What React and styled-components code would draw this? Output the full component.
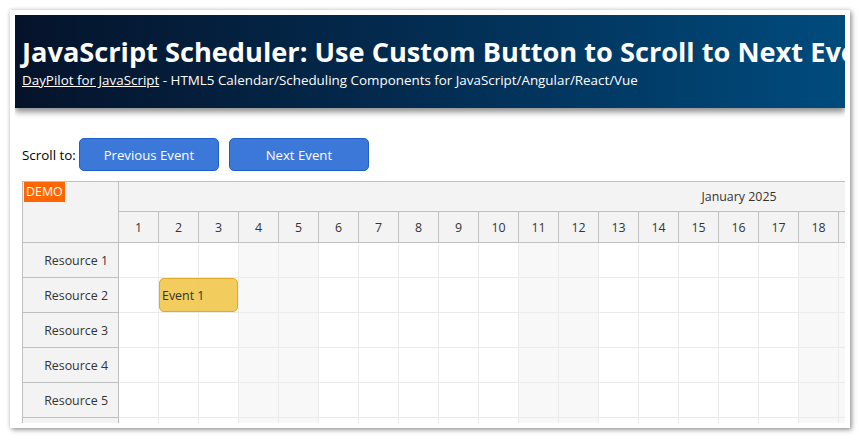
import React from "react";
import styled, { createGlobalStyle } from "styled-components";

const Global = createGlobalStyle`
  html, body { margin: 0; padding: 0; background: #fff; }
  body { font-family: "Open Sans", "Noto Sans", sans-serif; }
`;

const Frame = styled.div`
  margin: 10px;
  width: 840px;
  height: 418px;
  box-sizing: border-box;
  padding: 5px;
  background: #fff;
  overflow: hidden;
  box-shadow: 2px 2px 5px rgba(0, 0, 0, 0.35), 0 0 4px rgba(0, 0, 0, 0.18);
`;

const Page = styled.div`
  width: 830px;
  height: 408px;
  overflow: hidden;
`;

const Header = styled.header`
  position: relative;
  z-index: 1;
  height: 93px;
  box-sizing: border-box;
  padding: 20px 0 0 7px;
  background: linear-gradient(90deg, #05132a 0%, #032a4e 45%, #004b7d 100%);
  box-shadow: 0 4px 6px rgba(0, 0, 0, 0.45);
  color: #fff;
  white-space: nowrap;
  overflow: hidden;
`;

const Title = styled.h1`
  margin: 0;
  font-size: 27.2px;
  line-height: 34px;
  font-weight: 700;
`;

const Subtitle = styled.div`
  margin-top: 1px;
  font-size: 13.4px;
  line-height: 20px;
  a { color: #fff; text-decoration: underline; }
`;

const Toolbar = styled.div`
  display: flex;
  align-items: center;
  gap: 10px;
  padding: 30px 0 10px 7px;
  font-size: 13.4px;
  color: #000;
`;

const Label = styled.span`
  margin-right: -7px;
`;

const Button = styled.button`
  width: 140px;
  height: 33px;
  box-sizing: border-box;
  background: #3c78d8;
  border: 1px solid #1f5fc8;
  border-radius: 5px;
  color: #fff;
  font-family: inherit;
  font-size: 13.2px;
  cursor: pointer;
`;

const Scheduler = styled.div`
  margin-left: 7px;
  display: flex;
  width: max-content;
  border-top: 1px solid #c0c0c0;
  border-left: 1px solid #c0c0c0;
  font-size: 12.4px;
  color: #333;
`;

const RowHeaders = styled.div`
  flex: none;
  width: 95px;
  background: #f3f3f3;
  border-right: 1px solid #c0c0c0;
`;

const Corner = styled.div`
  height: 60px;
  padding: 0 1px;
  border-bottom: 1px solid #c0c0c0;
`;

const Demo = styled.span`
  display: inline-block;
  background: #ff6600;
  color: #fff;
  padding: 0 2px;
  line-height: 20px;
  font-size: 12.4px;
`;

const RowHeader = styled.div`
  height: 34px;
  border-bottom: 1px solid #c0c0c0;
  display: flex;
  align-items: center;
  justify-content: flex-end;
  padding-right: 10px;
`;

const Timeline = styled.div`
  flex: none;
  width: 1240px;
`;

const MonthCell = styled.div`
  height: 29px;
  background: #f3f3f3;
  border-bottom: 1px solid #c0c0c0;
  display: flex;
  align-items: center;
  justify-content: center;
`;

const DayRow = styled.div`
  display: flex;
  height: 30px;
  background: #f3f3f3;
  border-bottom: 1px solid #c0c0c0;
`;

const DayCell = styled.div`
  width: 39px;
  flex: none;
  border-right: 1px solid #c0c0c0;
  display: flex;
  align-items: center;
  justify-content: center;
`;

const GridRow = styled.div`
  position: relative;
  display: flex;
  height: 34px;
  border-bottom: 1px solid #ebebeb;
`;

const GridCell = styled.div`
  width: 39px;
  flex: none;
  border-right: 1px solid #ebebeb;
  background: ${(p) => (p.$weekend ? "#f8f8f8" : "#fff")};
`;

const Event = styled.div`
  position: absolute;
  top: 0;
  height: 34px;
  box-sizing: border-box;
  background: rgba(241, 199, 74, 0.9);
  border: 1px solid #e0a92a;
  border-radius: 5px;
  display: flex;
  align-items: center;
  padding-left: 2px;
  color: #333;
  font-size: 12.4px;
`;

const days = Array.from({ length: 31 }, (_, i) => i + 1);
const isWeekend = (d) => {
  const dow = (d + 2) % 7; // Jan 1 2025 = Wednesday (3)
  return dow === 6 || dow === 0;
};
const resources = [1, 2, 3, 4, 5, 6, 7];
const events = [{ resource: 2, start: 2, days: 2, text: "Event 1" }];

export default function App() {
  return (
    <>
      <Global />
      <Frame>
        <Page>
          <Header>
            <Title>JavaScript Scheduler: Use Custom Button to Scroll to Next Event</Title>
            <Subtitle>
              <a href="#">DayPilot for JavaScript</a> - HTML5 Calendar/Scheduling Components for JavaScript/Angular/React/Vue
            </Subtitle>
          </Header>
          <Toolbar>
            <Label>Scroll to:</Label>
            <Button>Previous Event</Button>
            <Button>Next Event</Button>
          </Toolbar>
          <Scheduler>
            <RowHeaders>
              <Corner>
                <Demo>DEMO</Demo>
              </Corner>
              {resources.map((r) => (
                <RowHeader key={r}>Resource {r}</RowHeader>
              ))}
            </RowHeaders>
            <Timeline>
              <MonthCell>January 2025</MonthCell>
              <DayRow>
                {days.map((d) => (
                  <DayCell key={d}>{d}</DayCell>
                ))}
              </DayRow>
              {resources.map((r) => (
                <GridRow key={r}>
                  {days.map((d) => (
                    <GridCell key={d} $weekend={isWeekend(d)} />
                  ))}
                  {events
                    .filter((e) => e.resource === r)
                    .map((e) => (
                      <Event
                        key={e.text}
                        style={{ left: (e.start - 1) * 40, width: e.days * 40 - 1 }}
                      >
                        {e.text}
                      </Event>
                    ))}
                </GridRow>
              ))}
            </Timeline>
          </Scheduler>
        </Page>
      </Frame>
    </>
  );
}
